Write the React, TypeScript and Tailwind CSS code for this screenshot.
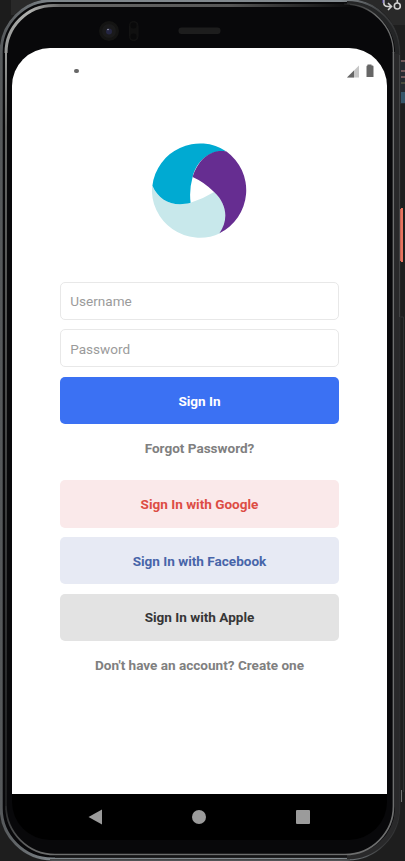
import React from "react";

function PhoneFrame() {
  return (
    <svg className="absolute inset-0" width="405" height="861" viewBox="0 0 405 861" fill="none" aria-hidden="true">
      <defs>
        <linearGradient id="rimX" x1="0" y1="0" x2="400" y2="0" gradientUnits="userSpaceOnUse">
          <stop offset="0" stopColor="#55585a" />
          <stop offset="0.13" stopColor="#7e858a" />
          <stop offset="0.85" stopColor="#858c91" />
          <stop offset="0.96" stopColor="#3a3b3c" />
          <stop offset="1" stopColor="#303132" />
        </linearGradient>
        <linearGradient id="shine" x1="5" y1="0" x2="350" y2="0" gradientUnits="userSpaceOnUse">
          <stop offset="0" stopColor="#989997" />
          <stop offset="0.07" stopColor="#b0b1af" />
          <stop offset="0.16" stopColor="#686868" />
          <stop offset="0.65" stopColor="#565656" />
          <stop offset="1" stopColor="#0b0b0c" />
        </linearGradient>
        <linearGradient id="shineLeft" x1="0" y1="52" x2="0" y2="810" gradientUnits="userSpaceOnUse">
          <stop offset="0" stopColor="#989997" />
          <stop offset="0.1" stopColor="#666765" />
          <stop offset="0.8" stopColor="#2c2d2e" />
          <stop offset="1" stopColor="#1d1e1f" />
        </linearGradient>
        <linearGradient id="rightFade" x1="340" y1="0" x2="394" y2="50" gradientUnits="userSpaceOnUse">
          <stop offset="0" stopColor="#6b6c6c" stopOpacity="0" />
          <stop offset="0.5" stopColor="#6b6c6c" />
          <stop offset="1" stopColor="#6b6c6c" />
        </linearGradient>
        <linearGradient id="lowerLeft" x1="0" y1="800" x2="0" y2="855" gradientUnits="userSpaceOnUse">
          <stop offset="0" stopColor="#1d1e1f" />
          <stop offset="1" stopColor="#6d6e6e" />
        </linearGradient>
      </defs>
      <path d="M0 0H11V60H0z" fill="#1c1c1c" />
      <path d="M11 0H45V15H11z" fill="#292929" />
      <path d="M350 0h55v25h-55z" fill="#292929" />
      <path d="M399 60h6v44h-6z" fill="#252a30" />
      <path d="M401 61h4M401 71h4M401 77h4" stroke="#70585a" strokeWidth="2" />
      <path d="M401 83h4" stroke="#6c6c48" />
      <path d="M401 92h4v11h-4z" fill="#36566a" />
      <rect x="0" y="-1" width="400" height="861" rx="52" fill="#08080a" />
      <rect x="1.200" y="0.500" width="397.500" height="858.500" rx="51" stroke="url(#rimX)" strokeWidth="3" />
      <path d="M397.200 54V810A50 50 0 0 1 347 857" stroke="#29292a" strokeWidth="4.500" />
      <path d="M347 3A50 50 0 0 1 397 54" stroke="#242526" strokeWidth="4" />
      <path d="M6 52V810" stroke="url(#shineLeft)" strokeWidth="2" />
      <path d="M6 53A47.500 47.500 0 0 1 53.500 5.500H350" stroke="url(#shine)" strokeWidth="3" />
      <path d="M344 4A49 49 0 0 1 393.500 53" stroke="url(#rightFade)" strokeWidth="1.300" />
      <path d="M393.500 52V806A48.500 48.500 0 0 1 345 854.500H55" stroke="#6d6e6e" strokeWidth="1.700" />
      <path d="M55 854.500A49 49 0 0 1 6 806" stroke="url(#lowerLeft)" strokeWidth="1.700" />
      <path d="M55 857.200H347" stroke="#202122" strokeWidth="1.500" />
      <path d="M50 859.500H350" stroke="#464748" strokeWidth="1" />
      <path d="M399.500 55V317" stroke="#414243" />
      <path d="M401 208h2v54h-2z" fill="#e8735f" />
      <path d="M400.500 209v52" stroke="#c76555" />
      <path d="M400.500 317h3v475" stroke="#303132" />
      <path d="M401.500 790v12" stroke="#727372" />
      <circle cx="109" cy="31" r="10" fill="#141413" />
      <circle cx="109" cy="31" r="7" fill="#1a1a1b" />
      <circle cx="109" cy="31.500" r="3" fill="#252642" />
      <circle cx="108" cy="29.500" r="0.800" fill="#9da0b3" />
      <rect x="129.500" y="21.500" width="8.500" height="19" rx="4" fill="#101010" stroke="#131313" />
      <circle cx="133.500" cy="25.500" r="3" fill="#09090a" />
      <circle cx="133.500" cy="36.500" r="3" fill="#09090a" />
      <rect x="178.500" y="27.500" width="42" height="6.500" rx="3" fill="#1d1d1d" />
      <path d="M383.800 0v2.500q0 4 4 4H391M388 3l3.500 3.500L388 10M397.300 0v3" stroke="#d2d2d2" strokeWidth="1.600" />
      <path d="M383 0v3" stroke="#7565d0" />
      <circle cx="397.300" cy="6" r="3" stroke="#d2d2d2" strokeWidth="1.600" />
    </svg>
  );
}

function StatusBar() {
  return (
    <div className="flex h-[46px] shrink-0 items-center justify-between pr-3 pl-[62px]">
      <span className="h-1 w-[5px] rounded-full bg-[#686868]" />
      <svg width="28" height="14" viewBox="0 0 28 14" aria-label="Signal and battery">
        <path d="M0 13.500L12 1.500v12z" fill="#c6c6c6" />
        <path d="M0 13.500L7 6.500v7z" fill="#666" />
        <path d="M20.500 0.500h4v1h1q1 0 1 1V13h-7V2.500q0-1 1-1z" fill="#666" />
      </svg>
    </div>
  );
}

function Logo() {
  return (
    <svg className="shrink-0" width="120" height="120" viewBox="1 2 358 358" aria-label="Logo">
      <path d="M37 168A143 143 0 0 0 240 310C266 273 263 225 222 187Q190 207 152 219C99 233 57 212 37 168Z" fill="#c8e8eb" />
      <path d="M38 168A143 143 0 0 1 259 66C208 62 171 93 158 142Q147 181 152 219C99 233 57 212 38 168Z" fill="#00aad2" />
      <path d="M259 66A143 143 0 0 1 238 310C264 273 263 225 222 187Q194 158 158 142C174 91 211 57 259 66Z" fill="#662d91" />
    </svg>
  );
}

function Field({ label, type = "text", className = "" }: { label: string; type?: string; className?: string }) {
  return (
    <input
      type={type}
      placeholder={label}
      className={`h-[38px] w-full rounded-[5px] border border-[#e8e8e8] bg-white px-[9.500px] text-[13.550px] text-[#333] outline-none placeholder:text-[#9b9b9b] ${className}`}
    />
  );
}

function Button({ label, className }: { label: string; className: string }) {
  return (
    <button className={`w-full rounded-[5px] text-[13.550px] font-bold ${className}`}>{label}</button>
  );
}

export default function App() {
  return (
    <div className="relative h-[861px] w-[405px] overflow-hidden bg-[#1e1e1e] font-[Roboto,sans-serif]">
      <PhoneFrame />
      <div className="relative pt-12 pl-3">
        <main className="flex h-[792px] w-[375px] flex-col overflow-hidden rounded-[38px] bg-black">
          <section className="flex h-[746px] flex-col bg-white">
            <StatusBar />
            <div className="flex flex-col items-center px-12 pt-9">
              <Logo />
              <form className="mt-8 flex w-[279.500px] flex-col" onSubmit={(e) => e.preventDefault()}>
                <div className="flex flex-col gap-[9px]">
                  <Field label="Username" />
                  <Field label="Password" type="password" className="pt-px" />
                </div>
                <div className="mt-[10px] flex">
                  <Button label="Sign In" className="h-[47px] pt-px bg-[#3b71f3] text-white" />
                </div>
                <button className="h-12 text-[13.550px] font-bold text-[#808080]">Forgot Password?</button>
                <div className="mt-2 flex flex-col gap-[9.500px]">
                  <Button label="Sign In with Google" className="h-[47.500px] pt-px bg-[#fae9ea] text-[#dd4d44]" />
                  <Button label="Sign In with Facebook" className="h-[47px] pt-px bg-[#e7eaf4] text-[#4765a9]" />
                  <Button label="Sign In with Apple" className="h-[47px] bg-[#e3e3e3] text-[#363636]" />
                </div>
                <button className="h-12 pt-px text-[13.550px] font-bold text-[#808080]">Don't have an account? Create one</button>
              </form>
            </div>
          </section>
          <nav className="flex h-[46px] shrink-0 items-center justify-between pr-[77px] pl-[76px]">
            <svg width="14" height="16" viewBox="0 0 14 16" aria-label="Back"><path d="M0.500 8L14 0.500v15z" fill="#9b9b9b" /></svg>
            <span className="h-[14px] w-[14px] rounded-full bg-[#9b9b9b]" />
            <span className="h-[14px] w-[14px] rounded-[1px] bg-[#9b9b9b]" />
          </nav>
        </main>
      </div>
    </div>
  );
}
